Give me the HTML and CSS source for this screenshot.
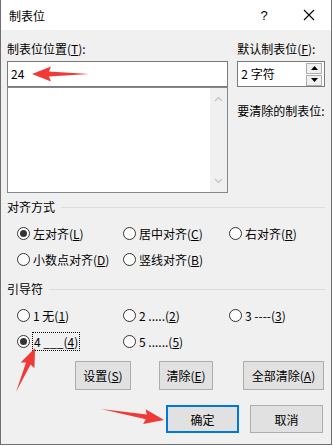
FILE: index.html
```html
<!DOCTYPE html>
<html lang="zh-CN">
<head>
    <meta charset="UTF-8">
    <meta name="viewport" content="width=device-width, initial-scale=1.0">
    <title>制表位</title>
    <link rel="stylesheet" href="styles.css">
</head>
<body>
    <div class="dialog">
        <div class="titlebar">
            <span class="title">制表位</span>
            <span class="help">?</span>
            <span class="close">
                <svg width="12" height="12" viewBox="0 0 12 12"><path d="M1 1L11 11M11 1L1 11" stroke="#000" stroke-width="1.1" fill="none"/></svg>
            </span>
        </div>

        <div class="content">
            <div class="top">
                <div class="left-col">
                    <div class="label">制表位位置(<u>T</u>):</div>
                    <div class="textbox">24</div>
                    <div class="listbox">
                        <div class="list-area"></div>
                        <div class="vscroll">
                            <svg width="9" height="6" viewBox="0 0 9 6"><path d="M1 5L4.5 1.5L8 5" stroke="#c2c2c2" stroke-width="1.2" fill="none"/></svg>
                            <svg width="9" height="6" viewBox="0 0 9 6"><path d="M1 1L4.5 4.5L8 1" stroke="#c2c2c2" stroke-width="1.2" fill="none"/></svg>
                        </div>
                    </div>
                </div>
                <div class="right-col">
                    <div class="label">默认制表位(<u>F</u>):</div>
                    <div class="spinbox">
                        <span>2 字符</span>
                        <div class="spin">
                            <span class="spin-btn"><svg width="7" height="4" viewBox="0 0 7 4"><path d="M0 4L3.5 0L7 4Z" fill="#000"/></svg></span>
                            <span class="spin-btn"><svg width="7" height="4" viewBox="0 0 7 4"><path d="M0 0L3.5 4L7 0Z" fill="#000"/></svg></span>
                        </div>
                    </div>
                    <div class="label clear-label">要清除的制表位:</div>
                </div>
            </div>

            <div class="group-head"><span>对齐方式</span><i class="rule"></i></div>
            <div class="radio-grid">
                <div class="radio checked"><span class="dot"></span><span>左对齐(<u>L</u>)</span></div>
                <div class="radio"><span class="dot"></span><span>居中对齐(<u>C</u>)</span></div>
                <div class="radio"><span class="dot"></span><span>右对齐(<u>R</u>)</span></div>
                <div class="radio"><span class="dot"></span><span>小数点对齐(<u>D</u>)</span></div>
                <div class="radio"><span class="dot"></span><span>竖线对齐(<u>B</u>)</span></div>
            </div>

            <div class="group-head second"><span>引导符</span><i class="rule"></i></div>
            <div class="radio-grid">
                <div class="radio"><span class="dot"></span><span>1 无(<u>1</u>)</span></div>
                <div class="radio"><span class="dot"></span><span>2 .....(<u>2</u>)</span></div>
                <div class="radio"><span class="dot"></span><span>3 ----(<u>3</u>)</span></div>
                <div class="radio checked"><span class="dot"></span><span class="focus">4 ___(<u>4</u>)</span></div>
                <div class="radio"><span class="dot"></span><span>5 ......(<u>5</u>)</span></div>
            </div>

            <div class="btn-row">
                <button class="btn btn-set">设置(<u>S</u>)</button>
                <button class="btn btn-clear">清除(<u>E</u>)</button>
                <button class="btn btn-clear-all">全部清除(<u>A</u>)</button>
            </div>

            <div class="btn-row bottom">
                <button class="btn btn-ok">确定</button>
                <button class="btn btn-cancel">取消</button>
            </div>
        </div>

        <!-- 标注箭头 -->
        <svg class="marks" width="333" height="446" viewBox="0 0 333 446">
            <g transform="translate(89 74) rotate(180)">
                <polygon points="0,0 40,-2.5 38,-7.5 57,0 38,7.5 40,2.5" fill="#ef3a35"/>
            </g>
            <g transform="translate(16 392) rotate(-66.6)">
                <polygon points="0,0 31,-2.5 29,-7.5 48,0 29,7.5 31,2.5" fill="#ef3a35"/>
            </g>
            <g transform="translate(101 409) rotate(9.9)">
                <polygon points="0,0 46,-2.5 44,-7.5 64,0 44,7.5 46,2.5" fill="#ef3a35"/>
            </g>
        </svg>
    </div>
</body>
</html>
```

FILE: styles.css
```css
body {
    margin: 0;
    background-color: #ffffff;
    font-family: 'Noto Sans CJK SC', 'Liberation Sans', sans-serif;
    font-size: 12px;
    color: #000;
}

u {
    text-decoration: underline;
    text-underline-offset: 1px;
}

.dialog {
    position: relative;
    box-sizing: border-box;
    width: 332px;
    height: 445px;
    background-color: #f0f0f0;
    border: 1px solid #6f6f6f;
    border-top: none;
}

.titlebar {
    display: flex;
    align-items: center;
    height: 30px;
    background-color: #ffffff;
    padding-left: 8px;
    padding-right: 14px;
}

.title {
    flex: 1;
    font-size: 12px;
}

.help {
    width: 16px;
    text-align: center;
    font-family: 'Liberation Sans', sans-serif;
    font-size: 13px;
}

.close {
    display: flex;
    justify-content: center;
    width: 16px;
    margin-left: 29px;
}

.content {
    padding: 0 6px 0 6px;
}

.top {
    display: flex;
    gap: 9px;
}

.left-col {
    width: 222px;
}

.right-col {
    width: 88px;
}

.label {
    height: 16px;
    line-height: 16px;
    margin-top: 11px;
    white-space: nowrap;
}

.clear-label {
    margin-top: 16px;
}

.textbox,
.spinbox {
    box-sizing: border-box;
    height: 26px;
    margin-top: 4px;
    background-color: #fff;
    border: 1px solid #7a7a7a;
    padding-left: 3px;
    line-height: 24px;
}

.spinbox {
    display: flex;
    align-items: center;
    justify-content: space-between;
    padding-right: 2px;
}

.spin {
    display: flex;
    flex-direction: column;
    gap: 1px;
}

.spin-btn {
    box-sizing: border-box;
    display: flex;
    align-items: center;
    justify-content: center;
    width: 16px;
    height: 11px;
    background-color: #f0f0f0;
    border: 1px solid #adadad;
}

.listbox {
    box-sizing: border-box;
    display: flex;
    height: 106px;
    background-color: #fff;
    border: 1px solid #828790;
}

.list-area {
    flex: 1;
}

.vscroll {
    display: flex;
    flex-direction: column;
    justify-content: space-between;
    align-items: center;
    width: 17px;
    padding: 8px 0 8px;
    background-color: #f0f0f0;
}

.group-head {
    display: flex;
    align-items: center;
    height: 16px;
    line-height: 16px;
    margin-top: 6px;
}

.group-head.second {
    margin-top: 9px;
}

.rule {
    flex: 1;
    height: 1px;
    margin-left: 6px;
    background-color: #dcdcdc;
}

.radio-grid {
    display: grid;
    grid-template-columns: 106px 106px 1fr;
    grid-auto-rows: 26px;
    margin-top: 5px;
    padding-left: 10px;
}

.radio {
    display: flex;
    align-items: center;
    white-space: nowrap;
}

.dot {
    position: relative;
    box-sizing: border-box;
    width: 13px;
    height: 13px;
    margin-right: 3px;
    border: 1px solid #333;
    border-radius: 50%;
    background-color: #fff;
}

.checked .dot::after {
    content: '';
    position: absolute;
    left: 2px;
    top: 2px;
    width: 7px;
    height: 7px;
    border-radius: 50%;
    background-color: #333;
}

.focus {
    margin-left: -1px;
    padding: 0 1px;
    line-height: 17px;
    border: 1px dotted #000;
}

.btn-row {
    display: flex;
    height: 29px;
    margin-top: 7px;
}

.btn {
    box-sizing: border-box;
    height: 100%;
    padding: 0;
    background-color: #e1e1e1;
    border: 1px solid #adadad;
    font-family: inherit;
    font-size: 12px;
    color: #000;
}

.btn-set {
    width: 56px;
    margin-left: 68px;
}

.btn-clear {
    width: 54px;
    margin-left: 28px;
}

.btn-clear-all {
    width: 81px;
    margin-left: 30px;
}

.btn-row.bottom {
    height: 28px;
    margin-top: 15px;
}

.btn-ok {
    width: 73px;
    margin-left: 159px;
    border: 2px solid #0078d7;
}

.btn-cancel {
    width: 73px;
    margin-left: 11px;
}

.marks {
    position: absolute;
    top: 0;
    left: -1px;
    pointer-events: none;
}
```
